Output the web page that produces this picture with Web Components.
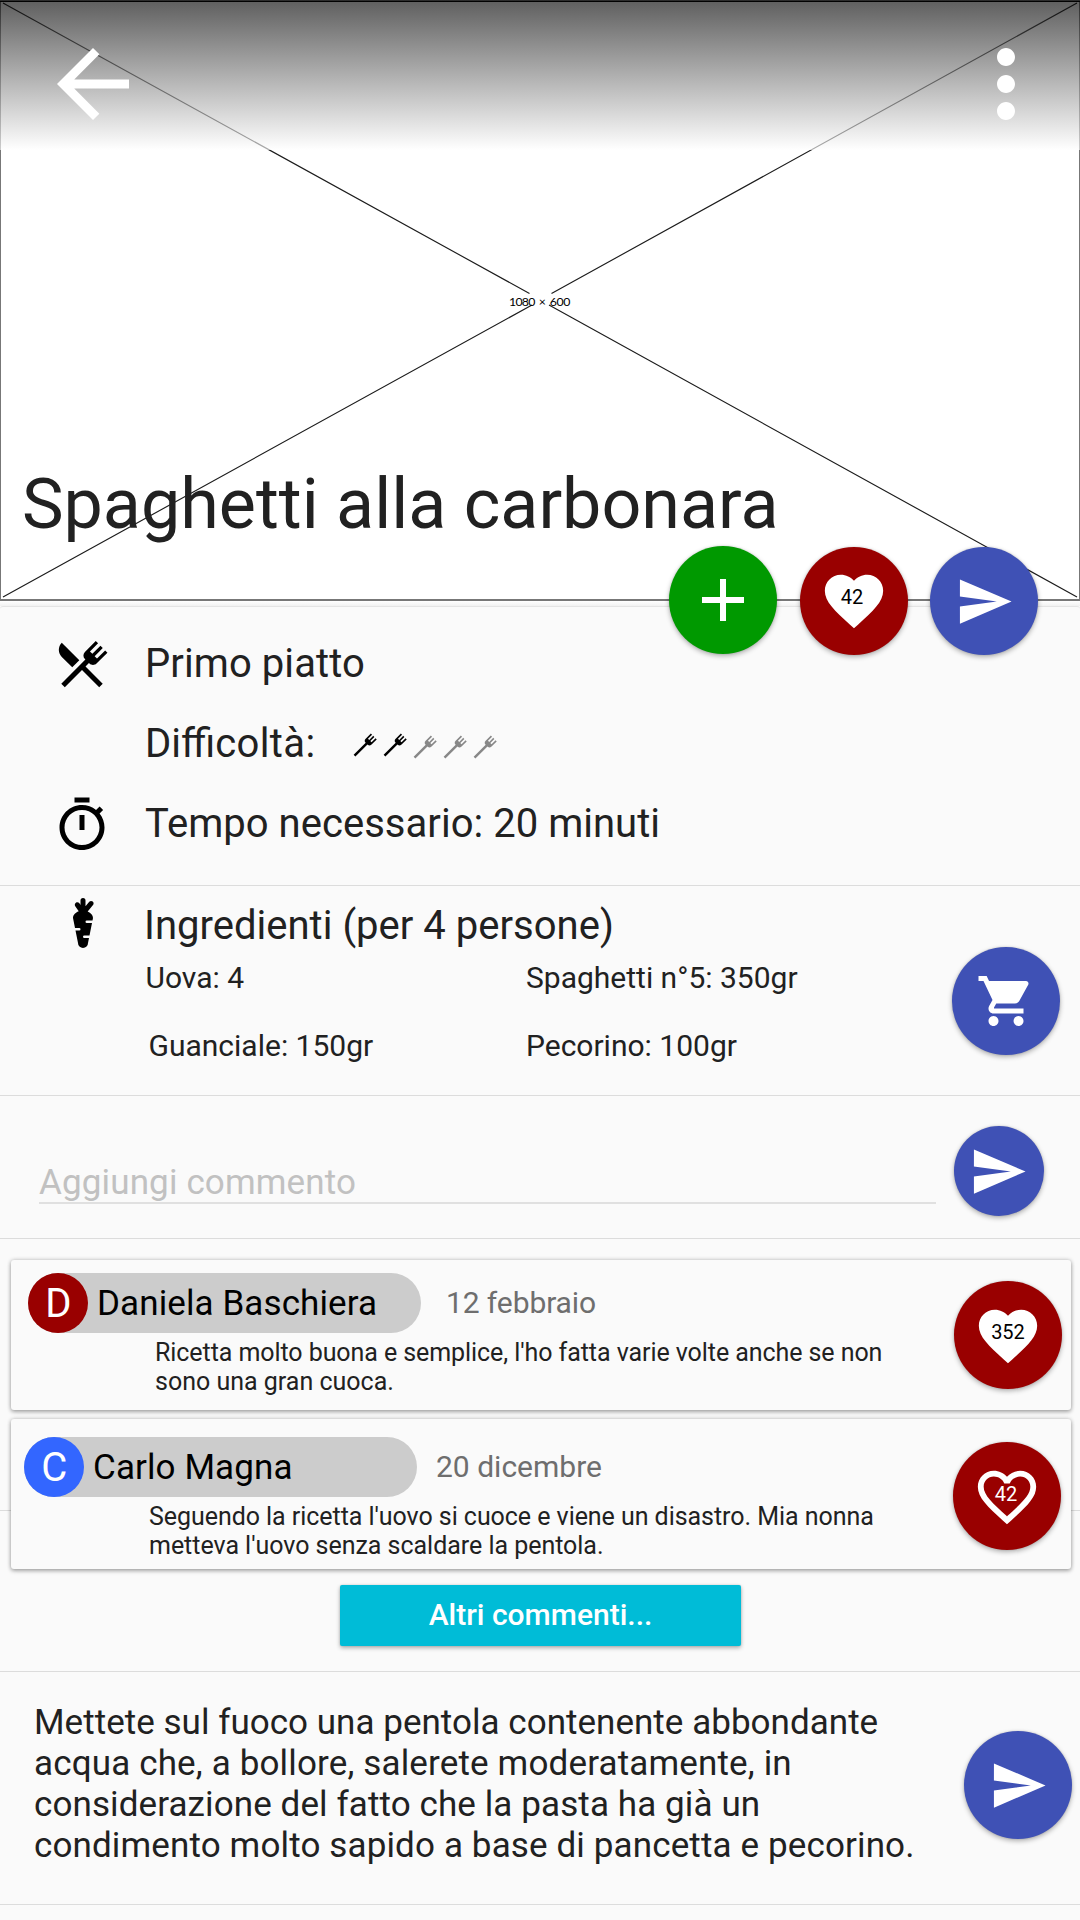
<!DOCTYPE html>
<html lang="it">
<head>
<meta charset="utf-8">
<title>Spaghetti alla carbonara</title>
<style>
  html, body { margin: 0; padding: 0; background: #fafafa; }
</style>
</head>
<body>
<recipe-page></recipe-page>
<script>
const ICONS = {
  back: 'M20 11H7.83l5.59-5.59L12 4l-8 8 8 8 1.41-1.41L7.83 13H20v-2z',
  more: 'M12 8c1.1 0 2-.9 2-2s-.9-2-2-2-2 .9-2 2 .9 2 2 2zm0 2c-1.1 0-2 .9-2 2s.9 2 2 2 2-.9 2-2-.9-2-2-2zm0 6c-1.1 0-2 .9-2 2s.9 2 2 2 2-.9 2-2-.9-2-2-2z',
  plus: 'M19 13h-6v6h-2v-6H5v-2h6V5h2v6h6v2z',
  heart: 'M12 21.35l-1.45-1.32C5.4 15.36 2 12.28 2 8.5 2 5.42 4.42 3 7.5 3c1.74 0 3.41.81 4.5 2.09C13.09 3.81 14.76 3 16.5 3 19.58 3 22 5.42 22 8.5c0 3.78-3.4 6.86-8.55 11.54L12 21.35z',
  heartOutline: 'M16.5 3c-1.74 0-3.41.81-4.5 2.09C10.91 3.81 9.24 3 7.5 3 4.42 3 2 5.42 2 8.5c0 3.78 3.4 6.86 8.55 11.54L12 21.35l1.45-1.32C18.6 15.36 22 12.28 22 8.5 22 5.42 19.58 3 16.5 3zm-4.4 15.55l-.1.1-.1-.1C7.14 14.24 4 11.39 4 8.5 4 6.5 5.5 5 7.5 5c1.54 0 3.04.99 3.57 2.36h1.87C13.46 5.99 14.96 5 16.5 5c2 0 3.5 1.5 3.5 3.5 0 2.89-3.14 5.74-7.9 10.05z',
  send: 'M2.01 21L23 12 2.01 3 2 10l15 2-15 2z',
  cart: 'M7 18c-1.1 0-1.99.9-1.99 2S5.9 22 7 22s2-.9 2-2-.9-2-2-2zM1 2v2h2l3.6 7.59-1.35 2.45c-.16.28-.25.61-.25.96 0 1.1.9 2 2 2h12v-2H7.42c-.14 0-.25-.11-.25-.25l.03-.12.9-1.63h7.45c.75 0 1.41-.41 1.75-1.03l3.58-6.49c.08-.14.12-.31.12-.48 0-.55-.45-1-1-1H5.21l-.94-2H1zm16 16c-1.1 0-1.99.9-1.99 2s.89 2 1.99 2 2-.9 2-2-.9-2-2-2z',
  silverware: 'M8.1,13.34L3.91,9.16C2.35,7.59 2.35,5.06 3.91,3.5L10.93,10.5L8.1,13.34M13.41,13L20.29,19.88L18.88,21.29L12,14.41L5.12,21.29L3.71,19.88L13.36,10.22L13.16,10C12.38,9.23 12.38,7.97 13.16,7.19L17.5,2.82L18.43,3.74L15.19,7L16.15,7.94L19.39,4.69L20.31,5.61L17.06,8.85L18,9.81L21.26,6.56L22.18,7.5L17.81,11.84C17.03,12.62 15.77,12.62 15,11.84L14.78,11.64L13.41,13Z',
  fork: 'M5.12,21.29L3.71,19.88L13.36,10.22L13.16,10C12.38,9.23 12.38,7.97 13.16,7.19L17.5,2.82L18.43,3.74L15.19,7L16.15,7.94L19.39,4.69L20.31,5.61L17.06,8.85L18,9.81L21.26,6.56L22.18,7.5L17.81,11.84C17.03,12.62 15.77,12.62 15,11.84L14.78,11.64L5.12,21.29Z',
  timer: 'M15 1H9v2h6V1zm-4 13h2V8h-2v6zm8.03-6.61l1.42-1.42c-.43-.51-.9-.99-1.41-1.41l-1.42 1.42C16.07 4.74 14.12 4 12 4c-4.97 0-9 4.03-9 9s4.02 9 9 9 9-4.03 9-9c0-2.12-.74-4.07-1.97-5.61zM12 20c-3.87 0-7-3.13-7-7s3.13-7 7-7 7 3.13 7 7-3.13 7-7 7z',
  carrot: 'M16,10L15.8,11H13.5A0.5,0.5 0 0,0 13,11.5A0.5,0.5 0 0,0 13.5,12H15.6L14.6,17H12.5A0.5,0.5 0 0,0 12,17.5A0.5,0.5 0 0,0 12.5,18H14.4L14,20A2,2 0 0,1 12,22A2,2 0 0,1 10,20L9,15H10.5A0.5,0.5 0 0,0 11,14.5A0.5,0.5 0 0,0 10.5,14H8.8L8,10C8,8.8 8.93,7.77 10.29,7.29L8.9,5.28C8.59,4.82 8.7,4.2 9.16,3.89C9.61,3.57 10.23,3.69 10.55,4.14L11,4.8V3A1,1 0 0,1 12,2A1,1 0 0,1 13,3V5.28L14.5,3.54C14.83,3.12 15.47,3.07 15.89,3.43C16.31,3.78 16.36,4.41 16,4.84L13.87,7.35C15.14,7.85 16,8.85 16,10Z'
};

class Base extends HTMLElement {
  constructor() {
    super();
    this.attachShadow({ mode: 'open' });
  }
  connectedCallback() { this.shadowRoot.innerHTML = this.render(); }
  attr(name, fallback = '') { return this.getAttribute(name) ?? fallback; }
}

customElements.define('md-icon', class extends Base {
  render() {
    const s = this.attr('size', '60');
    return `<style>
      :host { display: block; flex: none; width: ${s}px; height: ${s}px; }
      svg { display: block; fill: currentColor; }
    </style>
    <svg width="${s}" height="${s}" viewBox="0 0 24 24"><path d="${ICONS[this.attr('name')]}"/></svg>`;
  }
});

/* Round action button; slotted text is drawn over the icon as a counter. */
customElements.define('fab-button', class extends Base {
  render() {
    const s = this.attr('size', '108');
    return `<style>
      :host { display: grid; place-items: center; flex: none; box-sizing: border-box;
        width: ${s}px; height: ${s}px; border-radius: 50%;
        background: var(--fab, #3f51b5); color: #fff;
        box-shadow: 0 2px 5px rgba(0,0,0,.3), 0 0 2px rgba(0,0,0,.14); }
      md-icon, span { grid-area: 1 / 1; }
      md-icon { margin: var(--icon-shift, 0); }
      span { z-index: 1; font-size: 20px; line-height: 23px; color: var(--count, #000);
        margin: var(--count-shift, 0 4px 8px 0); }
    </style>
    <md-icon name="${this.attr('icon')}" size="${this.attr('icon-size', '59')}"></md-icon>
    <span><slot></slot></span>`;
  }
});

customElements.define('hero-image', class extends Base {
  render() {
    return `<style>
      :host { display: block; position: relative; z-index: 1; flex: none; box-sizing: border-box; height: 606px;
        background: linear-gradient(#fff 601px, #f1f1f1); }
      .picture { display: block; }
      header { position: absolute; inset: 0 0 auto 0; height: 150px; box-sizing: border-box;
        display: flex; justify-content: space-between; align-items: flex-start;
        padding: 30px 20px 0 39px; color: #fff; }
      header::before { content: ""; position: absolute; inset: 0; opacity: .63;
        background: linear-gradient(#000, #fff); }
      header md-icon { position: relative; }
      h1 { position: absolute; left: 22px; top: 463px; margin: 0; white-space: nowrap;
        font-weight: 400; font-size: 70px; line-height: 82px; color: #212121; }
      .actions { position: absolute; right: 42px; bottom: -49px; z-index: 2;
        display: flex; align-items: flex-end; }
    </style>
    <svg class="picture" width="1080" height="601" viewBox="0 0 1080 601">
      <g stroke="#1c1c1c" stroke-width="1.15">
        <path d="M3 3L529.5 293.5M1077 3L551.5 293.5M3 597L532 305M1077 597L549 305"/>
      </g>
      <g fill="#777">
        <path d="M0 0h1v601h-1zM1079 0h1v601h-1zM0 599h1080v2h-1080z"/>
        <path d="M0 0h1080v1h-1080z" fill="#777"/><path d="M0 1h1080v1h-1080z" fill="#000"/>
      </g>
      <text y="306" font-family="Lato, sans-serif" font-size="12.3" fill="#000" x="509 515.4 521.8 528.2 535 538.7 545 549.8 556.4 563.2">1080 × 600</text>
    </svg>
    <header><md-icon name="back" size="108"></md-icon><md-icon name="more" size="108"></md-icon></header>
    <h1><slot></slot></h1>
    <div class="actions"><slot name="actions"></slot></div>`;
  }
});

customElements.define('recipe-section', class extends Base {
  render() {
    return `<style>
      :host { display: flex; flex: none; box-sizing: border-box; width: 1080px; background: #fafafa;
        border-bottom: 1px solid #dcdcdc; }
    </style><slot></slot>`;
  }
});

customElements.define('info-row', class extends Base {
  render() {
    const icon = this.attr('icon');
    return `<style>
      :host { display: flex; height: 47px; gap: var(--gap, 33px); font-size: 40px; line-height: 47px;
        white-space: nowrap; color: #212121; }
      .icon { flex: none; width: 60px; color: #000; }
      md-icon { margin: var(--icon-top, -6px) 0 0 var(--icon-left, 0); }
      .text { display: flex; }
    </style>
    <div class="icon">${icon ? `<md-icon name="${icon}"></md-icon>` : ''}</div>
    <div class="text"><slot></slot></div>`;
  }
});

customElements.define('fork-rating', class extends Base {
  render() {
    const value = +this.attr('value', '0');
    let forks = '';
    for (let i = 0; i < 5; i++)
      forks += `<md-icon name="fork" size="30" class="${i < value ? 'on' : 'off'}"></md-icon>`;
    return `<style>
      :host { display: flex; margin: 10px 0 0 33px; }
      .on { color: #000; }
      .off { color: #888; margin-top: 2px; }
    </style>${forks}`;
  }
});

customElements.define('user-chip', class extends Base {
  render() {
    return `<style>
      :host { display: flex; flex: none; box-sizing: border-box; width: 393px; height: 60px;
        border-radius: 30px; background: #ccc; color: #000; }
      .avatar { width: 60px; height: 60px; border-radius: 50%; background: var(--avatar);
        color: #fff; font-size: 40px; line-height: 61px; text-align: center; text-indent: .5px; }
      .name { padding-left: 9px; font-size: 35px; line-height: 62px; letter-spacing: .1px; white-space: nowrap; }
    </style>
    <div class="avatar">${this.attr('letter')}</div>
    <div class="name"><slot></slot></div>`;
  }
});

customElements.define('comment-card', class extends Base {
  render() {
    return `<style>
      :host { display: flex; box-sizing: border-box; position: relative; height: 150px; border-radius: 3px;
        background: #fafafa; box-shadow: 0 2px 4px rgba(0,0,0,.28), 0 0 4px rgba(0,0,0,.22); }
      .body { flex: 1; }
      .head { display: flex; align-items: center; gap: var(--date-gap, 25px); }
      .date { font-size: 30px; line-height: 60px; letter-spacing: var(--date-spacing, 0); color: #6e6e6e; }
      p { margin: 0; padding: 5px 0 0 var(--text-left, 126px); font-size: 25px; line-height: 29px;
        color: #212121; white-space: nowrap; }
    </style>
    <div class="body">
      <div class="head"><slot name="chip"></slot><span class="date">${this.attr('date')}</span></div>
      <p><slot></slot></p>
    </div>
    <slot name="like"></slot>`;
  }
});

customElements.define('raised-button', class extends Base {
  render() {
    return `<style>
      :host { display: block; width: 401px; height: 61px; border-radius: 2px; background: #00bcd7; color: #fff;
        font-size: 30px; font-weight: 500; line-height: 59px; text-align: center;
        box-shadow: 0 2px 4px rgba(0,0,0,.3), 0 0 2px rgba(0,0,0,.15); }
    </style><slot></slot>`;
  }
});

customElements.define('comment-field', class extends Base {
  render() {
    return `<style>
      :host { display: block; box-sizing: border-box; width: 897px; height: 44px; border-bottom: 2px solid #e0e0e0;
        font-size: 35px; line-height: 45px; letter-spacing: .14px; color: #c1c1c1; }
    </style><slot></slot>`;
  }
});

customElements.define('recipe-page', class extends Base {
  render() {
    return `<style>
      :host { display: flex; flex-direction: column; width: 1080px; height: 1920px; overflow: hidden;
        background: #fafafa; color: #212121; font-family: Roboto, "Liberation Sans", sans-serif; }
      .red { --fab: #990000; }
      .green { --fab: #009900; --count-shift: 0; }
      .info { height: 280px; flex-direction: column; gap: 33px; padding: 33px 0 0 52px;
        border-top: 1px solid #e4e4e4; border-radius: 3px 3px 0 0; }
      .ingredients { height: 210px; padding: 16px 20px 0 52px; justify-content: space-between; }
      .list { display: grid; grid-template-columns: 380px auto; row-gap: 33px; margin: 11px 0 0 93.5px;
        font-size: 30px; line-height: 35px; }
      .write { height: 143px; padding: 30px 36px 0 39px; justify-content: space-between; }
      .comments { height: 433px; flex-direction: column; align-items: stretch; padding: 21px 9px 0 11px; gap: 9px;
        background: linear-gradient(#dcdcdc, #dcdcdc) 0 271px / 100% 1px no-repeat #fafafa; }
      .steps { height: 233px; padding: 28px 8px 0 34px; justify-content: space-between; font-size: 35px; line-height: 41px; }
      .steps p { margin: 2px 0 0; white-space: nowrap; }
    </style>
    <hero-image>Spaghetti alla carbonara
      <fab-button slot="actions" class="green" icon="plus" icon-size="72" style="margin:0 23px 1px 0"></fab-button>
      <fab-button slot="actions" class="red" icon="heart" icon-size="70" style="margin-right:22px">42</fab-button>
      <fab-button slot="actions" icon="send" style="--icon-shift:0 0 0 1px"></fab-button>
    </hero-image>
    <recipe-section class="info">
      <info-row icon="silverware" style="letter-spacing:.08px">Primo piatto</info-row>
      <info-row><span>Diffi<span style="letter-spacing:.4px">coltà:</span></span><fork-rating value="2"></fork-rating></info-row>
      <info-row icon="timer" style="--icon-top:-5px;letter-spacing:.03px">Tempo necessario: 20 minuti</info-row>
    </recipe-section>
    <recipe-section class="ingredients">
      <div>
        <info-row icon="carrot" style="--icon-top:-9px;--icon-left:1px;--gap:32px;letter-spacing:.02px">Ingredienti (per 4 persone)</info-row>
        <div class="list">
          <span>Uova: 4</span><span style="padding-left:.5px">Spaghetti n°5: 350gr</span>
          <span style="padding-left:3px">Guanciale: 150gr</span><span style="padding-left:.5px">Pecorino: 100gr</span>
        </div>
      </div>
      <fab-button icon="cart" icon-size="60" style="margin-top:45px"></fab-button>
    </recipe-section>
    <recipe-section class="write">
      <comment-field style="margin-top:34px">Aggiungi commento</comment-field>
      <fab-button size="90" icon="send" style="--icon-shift:1px 1px 0 0"></fab-button>
    </recipe-section>
    <recipe-section class="comments">
      <comment-card date="12 febbraio" style="padding:13px 9px 0 17px;--text-left:127px;--date-spacing:-.1px">
        <user-chip slot="chip" letter="D" style="--avatar:#990000">Daniela Baschiera</user-chip>
        <span style="letter-spacing:-.07px">Ricetta molto buona e semplice, l'ho fatta varie volte anche se non</span><br>sono una gran cuoca.
        <fab-button slot="like" class="red" icon="heart" icon-size="70" style="margin-top:8px;--icon-shift:1px 0 0 0;--count-shift:0 0 6px 0">352</fab-button>
      </comment-card>
      <comment-card date="20 dicembre" style="padding:18px 10px 0 13px;--text-left:125px;--date-gap:19px">
        <user-chip slot="chip" letter="C" style="--avatar:#3366ff">Carlo Magna</user-chip>
        <span style="letter-spacing:-.05px">Seguendo la ricetta l'uovo si cuoce e viene un disastro. Mia nonna</span><br><span style="letter-spacing:-.03px">metteva l'uovo senza scaldare la pentola.</span>
        <fab-button slot="like" class="red" icon="heartOutline" icon-size="70" style="margin-top:5px;--count:#fff;--icon-shift:1px 0 0 0;--count-shift:0 2px 4px 0">42</fab-button>
      </comment-card>
      <raised-button style="margin:7px 0 0 329px">Altri commenti...</raised-button>
    </recipe-section>
    <recipe-section class="steps">
      <p><span style="letter-spacing:.03px">Mettete sul fuoco una pentola contenente abbondante</span><br><span style="letter-spacing:.15px">acqua che, a bollore, salerete moderatamente, in</span><br><span style="letter-spacing:.1px">considerazione del fatto che la pasta ha già un</span><br><span style="letter-spacing:.13px">condimento molto sapido a base di pancetta e pecorino.</span></p>
      <fab-button icon="send" style="margin-top:31px"></fab-button>
    </recipe-section>`;
  }
});
</script>
</body>
</html>
